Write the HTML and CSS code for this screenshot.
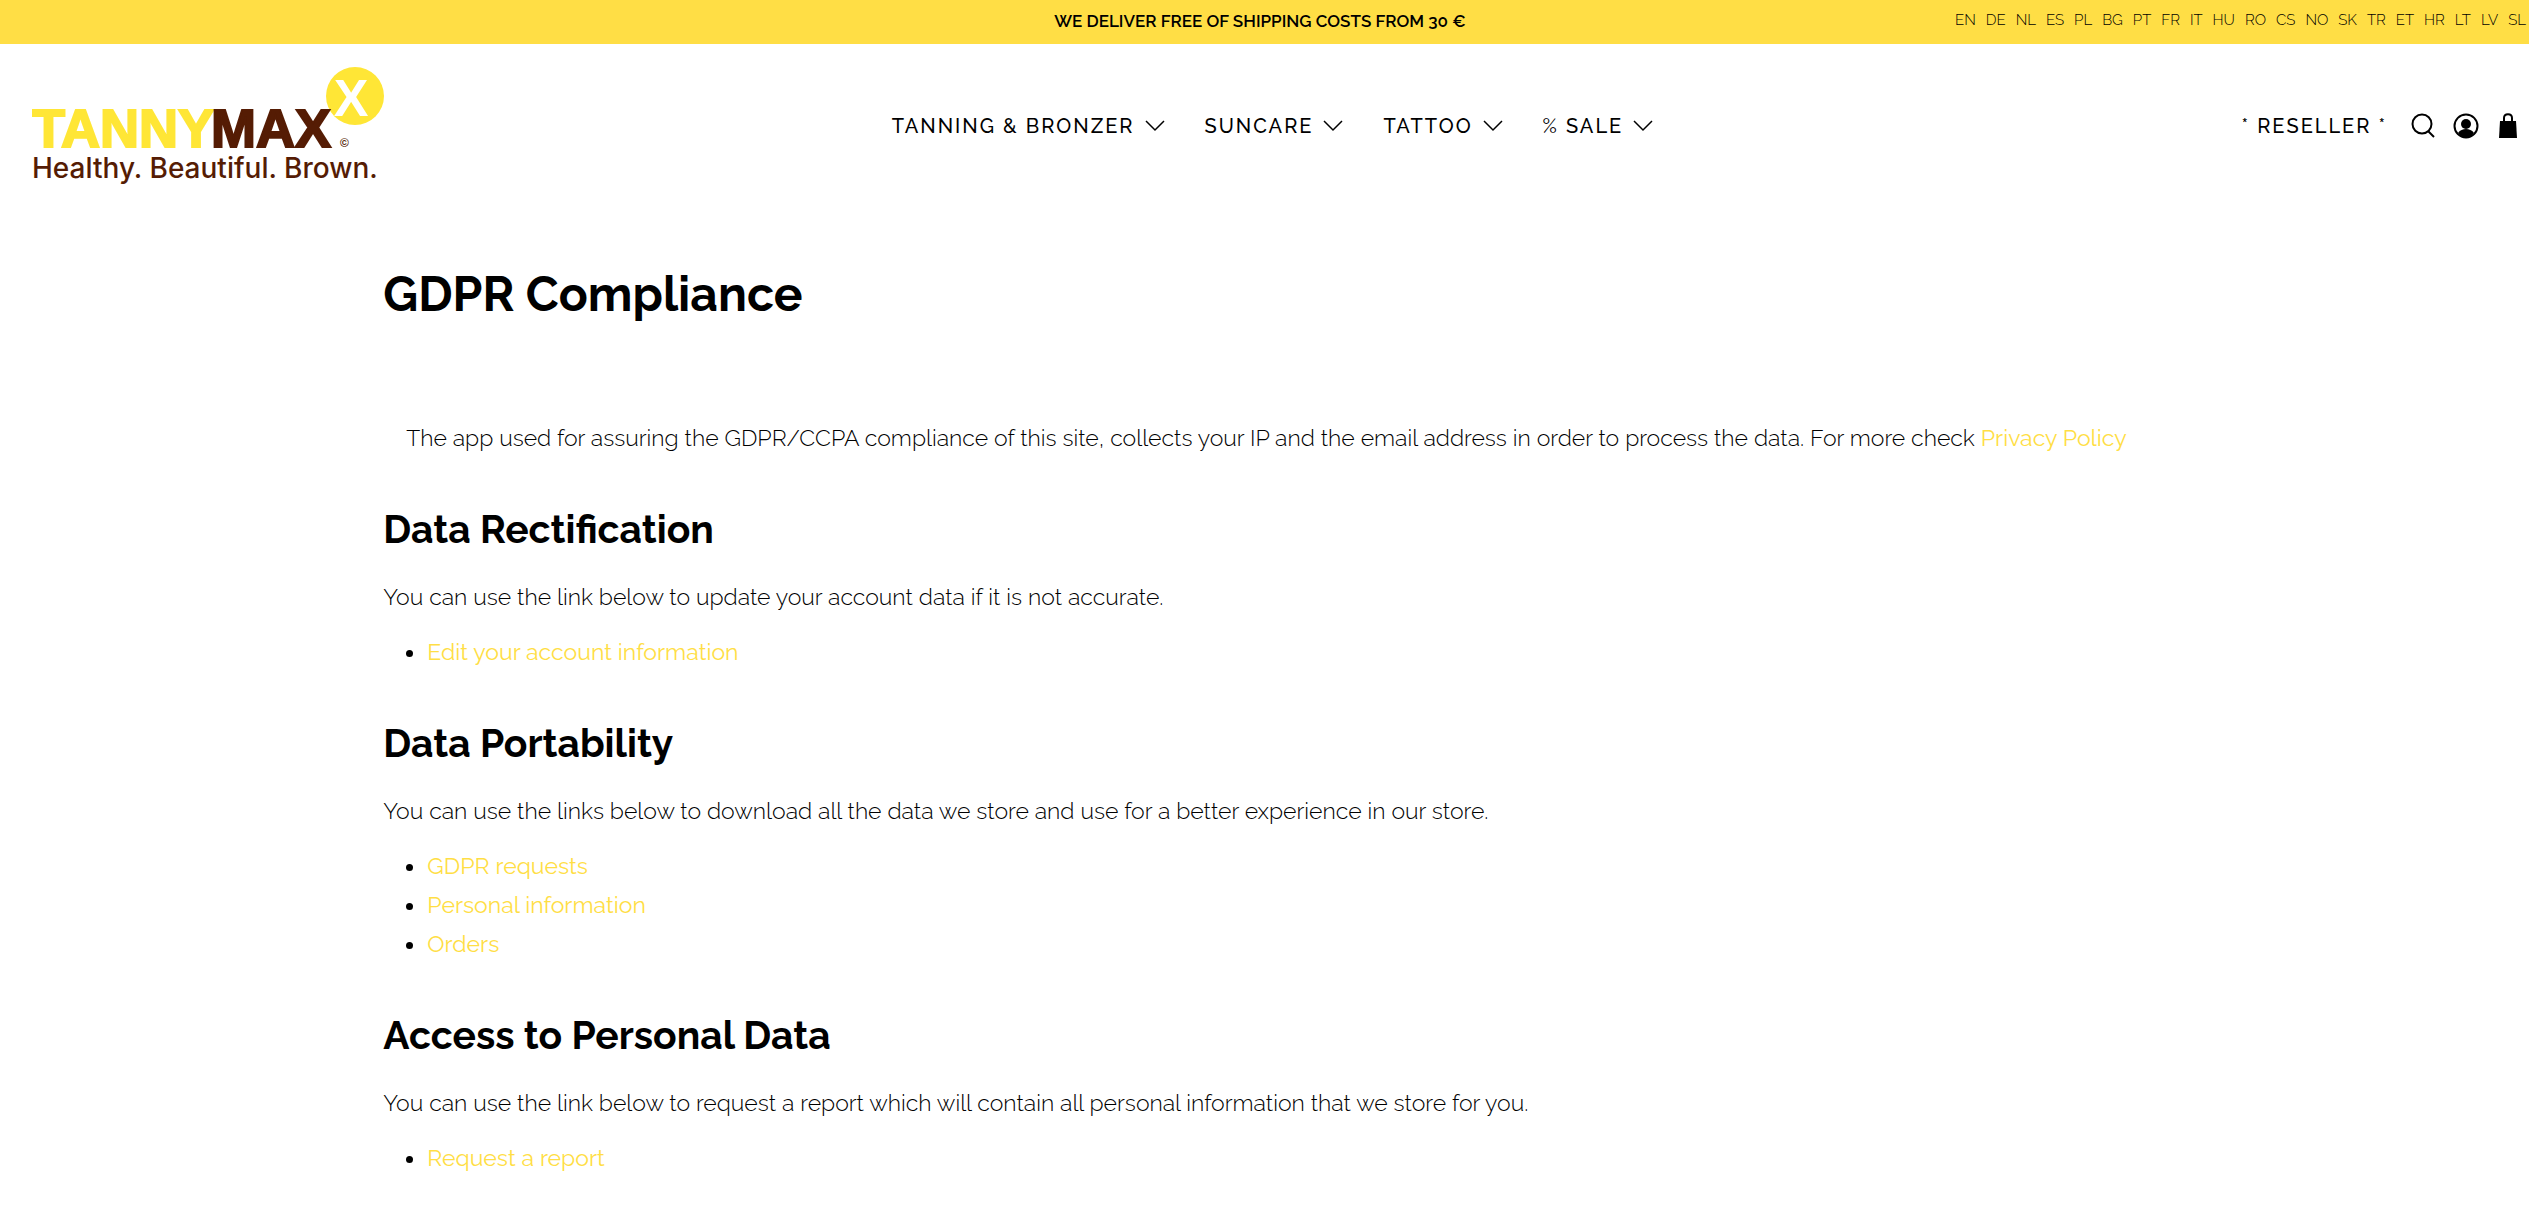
FILE: index.html
```html
<!DOCTYPE html>
<html lang="en">
<head>
    <meta charset="UTF-8">
    <meta name="viewport" content="width=device-width, initial-scale=1.0">
    <title>GDPR Compliance</title>
    <link rel="stylesheet" href="styles.css">
</head>
<body>
    <div class="top-bar">
        <p class="announcement">WE DELIVER FREE OF SHIPPING COSTS FROM 30 €</p>
        <nav class="languages" aria-label="Languages">
            <a href="#">EN</a>
            <a href="#">DE</a>
            <a href="#">NL</a>
            <a href="#">ES</a>
            <a href="#">PL</a>
            <a href="#">BG</a>
            <a href="#">PT</a>
            <a href="#">FR</a>
            <a href="#">IT</a>
            <a href="#">HU</a>
            <a href="#">RO</a>
            <a href="#">CS</a>
            <a href="#">NO</a>
            <a href="#">SK</a>
            <a href="#">TR</a>
            <a href="#">ET</a>
            <a href="#">HR</a>
            <a href="#">LT</a>
            <a href="#">LV</a>
            <a href="#">SL</a>
        </nav>
    </div>

    <header class="header">
        <a class="logo" href="#" aria-label="Tannymaxx home">
            <svg width="354" height="120" viewBox="0 0 354 120">
                <circle cx="323" cy="30" r="29" fill="#ffe636"/>
                <text class="logo-x" x="319" y="50" text-anchor="middle">X</text>
                <text class="logo-name" x="0" y="81" fill="#ffe636" stroke="#ffe636">TANNY</text>
                <text class="logo-name" x="179" y="81" fill="#551c04" stroke="#551c04">MAX</text>
                <text class="logo-copy" x="308" y="81">©</text>
                <text class="logo-claim" x="0" y="112">Healthy. Beautiful. Brown.</text>
            </svg>
        </a>

        <nav class="menu" aria-label="Main">
            <a href="#">TANNING &amp; BRONZER <svg class="chevron" viewBox="0 0 20 12"><path d="M1 1l9 9 9-9"/></svg></a>
            <a href="#">SUNCARE <svg class="chevron" viewBox="0 0 20 12"><path d="M1 1l9 9 9-9"/></svg></a>
            <a href="#">TATTOO <svg class="chevron" viewBox="0 0 20 12"><path d="M1 1l9 9 9-9"/></svg></a>
            <a href="#"><span><span class="thin">%</span> SALE</span> <svg class="chevron" viewBox="0 0 20 12"><path d="M1 1l9 9 9-9"/></svg></a>
        </nav>

        <div class="actions">
            <a class="reseller" href="#">* RESELLER *</a>
            <button class="icon-btn" type="button" aria-label="Search">
                <svg width="26" height="26" viewBox="0 0 26 26"><circle cx="11" cy="11" r="9.5" fill="none" stroke="#000" stroke-width="2"/><path d="M17 18l6 6" stroke="#000" stroke-width="2"/></svg>
            </button>
            <a class="icon-btn" href="#" aria-label="Account">
                <svg width="26" height="26" viewBox="0 0 26 26"><circle cx="13" cy="13" r="11.5" fill="none" stroke="#000" stroke-width="2"/><circle cx="13" cy="11" r="5"/><path d="M5 20c2-3 5-4 8-4s6 1 8 4c-2 3-5 5-8 5s-6-2-8-5z"/></svg>
            </a>
            <a class="icon-btn" href="#" aria-label="Cart">
                <svg width="26" height="26" viewBox="0 0 26 26"><path d="M5 8h16l1 17H4z"/><path d="M9 9V5c0-5 8-5 8 0v4" fill="none" stroke="#000" stroke-width="2"/></svg>
            </a>
        </div>
    </header>

    <main class="content">
        <h1>GDPR Compliance</h1>
        <p class="intro">The app used for assuring the GDPR/CCPA compliance of this site, collects your IP and the email address in order to process the data. For more check <a href="#">Privacy Policy</a></p>

        <h2>Data Rectification</h2>
        <p>You can use the link below to update your account data if it is not accurate.</p>
        <ul>
            <li><a href="#">Edit your account information</a></li>
        </ul>

        <h2>Data Portability</h2>
        <p>You can use the links below to download all the data we store and use for a better experience in our store.</p>
        <ul>
            <li><a href="#">GDPR requests</a></li>
            <li><a href="#">Personal information</a></li>
            <li><a href="#">Orders</a></li>
        </ul>

        <h2>Access to Personal Data</h2>
        <p>You can use the link below to request a report which will contain all personal information that we store for you.</p>
        <ul>
            <li><a href="#">Request a report</a></li>
        </ul>
    </main>
</body>
</html>
```
FILE: styles.css
```css
* {
    box-sizing: border-box;
}
body {
    margin: 0;
    font-family: Raleway, Lato, sans-serif;
    font-size: 23px;
    font-weight: 300;
    line-height: 39px;
    color: #000;
    background: #fff;
}
a {
    color: #ffde45;
    text-decoration: none;
}
.top-bar {
    display: grid;
    grid-template-columns: 1fr auto 1fr;
    align-items: center;
    height: 44px;
    padding: 0 3px 0 0;
    background-color: #ffde45;
}
.announcement {
    grid-column: 2;
    margin: 0;
    padding: 0 6px 2px 0;
    font-size: 17px;
    font-weight: 600;
}
.languages {
    display: flex;
    justify-content: flex-end;
    gap: 10px;
    padding-bottom: 4px;
    font-size: 15px;
}
.languages a {
    color: #000;
}
.header {
    display: grid;
    grid-template-columns: 1fr auto 1fr;
    align-items: center;
    padding: 22px 8px 20px 24px;
}
.logo {
    padding-left: 8px;
}
.logo svg {
    display: block;
}
.logo-name {
    font: 700 54px "Liberation Sans", sans-serif;
    stroke-width: 2;
}
.logo-x {
    font: 700 52px "Liberation Sans", sans-serif;
    fill: #fff;
}
.logo-copy {
    font: 700 12px "Liberation Sans", sans-serif;
    fill: #551c04;
}
.logo-claim {
    font: 500 28px Inter, sans-serif;
    fill: #551c04;
}
.menu {
    display: flex;
    gap: 40px;
}
.menu a,
.reseller {
    font-size: 20px;
    font-weight: 500;
    letter-spacing: 2px;
    color: #000;
}
.menu a {
    display: flex;
    align-items: center;
    gap: 10px;
}
.thin {
    font-weight: 400;
}
.chevron {
    width: 20px;
    height: 12px;
    fill: none;
    stroke: #000;
    stroke-width: 1.5;
}
.actions {
    display: flex;
    justify-content: flex-end;
    align-items: center;
    gap: 16px;
}
.reseller {
    margin-right: 8px;
}
.icon-btn {
    display: flex;
    padding: 0;
    border: 0;
    background: none;
    cursor: pointer;
}
.content {
    width: 70%;
    margin: 0 auto;
    padding: 56px 0 56px 4px;
}
h1,
h2 {
    font-weight: 700;
}
h1 {
    margin: 0 0 92px;
    font-size: 48px;
    line-height: 64px;
}
h2 {
    margin: 48px 0 24px;
    font-size: 39px;
    line-height: 48px;
}
p {
    margin: 0 0 16px;
}
.content a {
    font-weight: 400;
}
.intro {
    text-align: center;
}
ul {
    margin: 0;
    padding-left: 44px;
}
```
